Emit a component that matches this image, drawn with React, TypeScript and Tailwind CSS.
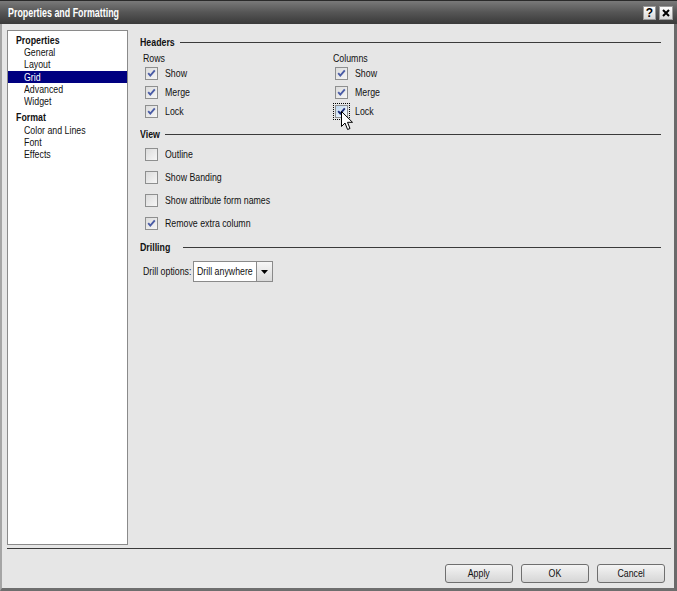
import React from "react";

const FONT = "font-['Liberation_Sans',Arial,sans-serif]";

function T({ children, c = "" }: { children: React.ReactNode; c?: string }) {
  return (
    <span className={"inline-block origin-left scale-x-[0.8] whitespace-nowrap leading-none " + c}>
      {children}
    </span>
  );
}

function Check({ checked, hover }: { checked?: boolean; hover?: boolean }) {
  return (
    <div
      className={
        "w-[13px] h-[13px] border border-[#8e8f8f] flex items-center justify-center shrink-0 " +
        (hover
          ? "bg-gradient-to-br from-[#bcd6ef] to-[#ffffff]"
          : "bg-gradient-to-br from-[#dcdcdc] to-[#f6f6f6]")
      }
    >
      {checked && (
        <svg width="11" height="11" viewBox="0 0 11 11">
          <path
            d="M2.2 5.2 L4.3 7.6 L8.8 2.4"
            fill="none"
            stroke={hover ? "#1c2a78" : "#4a5ca6"}
            strokeWidth="1.9"
          />
        </svg>
      )}
    </div>
  );
}

function Row({ label, checked, hover, h }: { label: string; checked?: boolean; hover?: boolean; h: string }) {
  return (
    <div className={"flex items-center " + h}>
      <div className="relative ml-[2px]">
        {hover && (
          <div className="absolute -left-[2px] -top-[2px] w-[17px] h-[17px] border border-dotted border-black" />
        )}
        <Check checked={checked} hover={hover} />
      </div>
      <span className="ml-[7px] text-[11px] text-[#111]">
        <T>{label}</T>
      </span>
    </div>
  );
}

function Section({ title, w }: { title: string; w: string }) {
  return (
    <div className="flex items-center h-[12px]">
      <div className={"text-[11px] font-bold text-[#111] overflow-visible " + w}>
        <T>{title}</T>
      </div>
      <div className="flex-1 h-px bg-[#3a3a3a] ml-[4px]" />
    </div>
  );
}

function Btn({ label }: { label: string }) {
  return (
    <div className="w-[68px] h-[19px] border border-[#6f6f6f] rounded-[3px] bg-gradient-to-b from-[#f4f4f4] to-[#d6d6d6] flex items-center justify-center text-[11px] text-[#111]">
      <span className="inline-block origin-center scale-x-[0.8] whitespace-nowrap leading-none">{label}</span>
    </div>
  );
}

export default function App() {
  const nav = (t: string, sel?: boolean) => (
    <div
      className={
        "h-[12.3px] flex items-center pl-[16px] text-[11px] " +
        (sel ? "bg-[#000080] text-white" : "text-[#111]")
      }
    >
      <T>{t}</T>
    </div>
  );
  return (
    <div className={"w-[677px] h-[591px] flex flex-col relative " + FONT}>
      {/* title bar */}
      <div className="h-[24px] shrink-0 border-t border-[#2a2a2a] bg-gradient-to-b from-[#7a7a7a] via-[#555555] to-[#3a3a3a] flex items-center pl-[8px] pr-[4px]">
        <span className="inline-block origin-left scale-x-[0.74] whitespace-nowrap text-white text-[12px] font-bold leading-none">
          Properties and Formatting
        </span>
        <div className="flex-1" />
        <div className="w-[13px] h-[14px] bg-gradient-to-b from-[#ffffff] to-[#d8d8d8] border border-[#9a9a9a] flex items-center justify-center text-[12px] font-black text-black leading-none">
          ?
        </div>
        <div className="w-[14px] h-[14px] ml-[3px] bg-gradient-to-b from-[#ffffff] to-[#d8d8d8] border border-[#9a9a9a] flex items-center justify-center">
          <svg width="8" height="8" viewBox="0 0 8 8">
            <path d="M1 1 L7 7 M7 1 L1 7" stroke="#000" strokeWidth="2" />
          </svg>
        </div>
      </div>
      {/* body */}
      <div className="flex-1 flex flex-col bg-[#e6e6e6] border-l-2 border-l-[#a5a5a5] border-r-[3px] border-r-[#6a6a6a] border-b-[3px] border-b-[#6e6e6e]">
        <div className="h-[524px] flex pl-[5px] pr-[13px]">
          {/* nav */}
          <div className="w-[121px] h-[515px] mt-[6px] bg-white border border-[#8a8a8a] pt-[3px]">
            <div className="h-[12.3px] flex items-center pl-[8px] text-[11px] font-bold text-[#111]">
              <T>Properties</T>
            </div>
            {nav("General")}
            {nav("Layout")}
            {nav("Grid", true)}
            {nav("Advanced")}
            {nav("Widget")}
            <div className="h-[12.3px] mt-[4px] flex items-center pl-[8px] text-[11px] font-bold text-[#111]">
              <T>Format</T>
            </div>
            {nav("Color and Lines")}
            {nav("Font")}
            {nav("Effects")}
          </div>
          {/* content */}
          <div className="flex-1 ml-[12px] pt-[12px]">
            <Section title="Headers" w="w-[36px]" />
            <div className="flex mt-[4px] pl-[3px]">
              <div className="w-[190px]">
                <div className="h-[12px] flex items-center text-[11px] text-[#111]">
                  <T>Rows</T>
                </div>
                <Row label="Show" checked h="h-[19px]" />
                <Row label="Merge" checked h="h-[19px]" />
                <Row label="Lock" checked h="h-[19px]" />
              </div>
              <div className="relative">
                <div className="h-[12px] flex items-center text-[11px] text-[#111]">
                  <T>Columns</T>
                </div>
                <Row label="Show" checked h="h-[19px]" />
                <Row label="Merge" checked h="h-[19px]" />
                <Row label="Lock" checked hover h="h-[19px]" />
                <svg
                  className="absolute left-[8px] top-[59px]"
                  width="13"
                  height="20"
                  viewBox="0 0 13 20"
                >
                  <path
                    d="M0.5 0.5 L0.5 15.5 L4 12 L6.6 18.5 L9 17.5 L6.5 11.3 L11.5 11.3 Z"
                    fill="#fff"
                    stroke="#000"
                    strokeWidth="1"
                  />
                </svg>
              </div>
            </div>
            <div className="mt-[7px]">
              <Section title="View" w="w-[21px]" />
            </div>
            <div className="mt-[3px] pl-[3px]">
              <Row label="Outline" h="h-[23px]" />
              <Row label="Show Banding" h="h-[23px]" />
              <Row label="Show attribute form names" h="h-[23px]" />
              <Row label="Remove extra column" checked h="h-[23px]" />
            </div>
            <div className="mt-[6px]">
              <Section title="Drilling" w="w-[39px]" />
            </div>
            <div className="mt-[8px] pl-[3px] flex items-center h-[21px]">
              <div className="w-[50px] text-[11px] text-[#111]">
                <T>Drill options:</T>
              </div>
              <div className="flex h-[21px] border border-[#8a8a8a] bg-white">
                <div className="w-[62px] flex items-center pl-[3px] text-[11px] text-[#111]">
                  <T>Drill anywhere</T>
                </div>
                <div className="w-[16px] border-l border-[#8a8a8a] bg-gradient-to-b from-[#f6f6f6] to-[#dadada] flex items-center justify-center">
                  <svg width="7" height="4" viewBox="0 0 7 4">
                    <path d="M0 0 L7 0 L3.5 4 Z" fill="#000" />
                  </svg>
                </div>
              </div>
            </div>
          </div>
        </div>
        <div className="h-px bg-[#3a3a3a] ml-[5px] mr-[3px]" />
        <div className="flex-1 flex justify-end items-start pt-[15px] pr-[9px] gap-[8px]">
          <Btn label="Apply" />
          <Btn label="OK" />
          <Btn label="Cancel" />
        </div>
      </div>
    </div>
  );
}
